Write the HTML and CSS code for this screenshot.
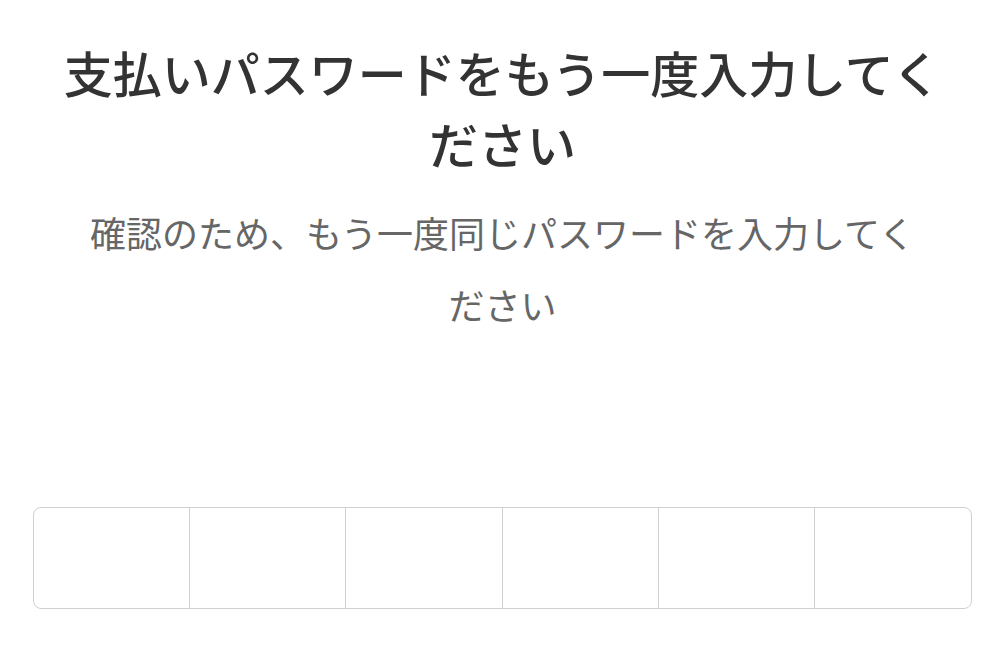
FILE: index.html
```html
<!DOCTYPE html>
<html lang="ja">
<head>
<meta charset="utf-8">
<title>支払いパスワード確認</title>
<link rel="stylesheet" href="styles.css">
</head>
<body>
<main class="page">
  <h1 class="title">支払いパスワードをもう一度入力してください</h1>
  <p class="subtitle">確認のため、もう一度同じパスワードを入力してください</p>
  <div class="pin">
    <div class="pin-cell"></div>
    <div class="pin-cell"></div>
    <div class="pin-cell"></div>
    <div class="pin-cell"></div>
    <div class="pin-cell"></div>
    <div class="pin-cell"></div>
  </div>
</main>
</body>
</html>
```
FILE: styles.css
```css
html, body {
  margin: 0;
  padding: 0;
  background: #ffffff;
}

body {
  font-family: "Noto Sans CJK JP", "Noto Sans", sans-serif;
}

.page {
  display: flex;
  flex-direction: column;
  align-items: stretch;
  padding: 36px 33px 0;
}

.title {
  margin: 0;
  padding: 0 20px;
  font-size: 49px;
  line-height: 71px;
  font-weight: 500;
  color: #333333;
  text-align: center;
}

.subtitle {
  margin: 18px 0 0;
  padding: 0 45px;
  font-size: 36px;
  line-height: 72px;
  font-weight: 400;
  color: #666666;
  text-align: center;
}

/* six-digit PIN entry row */
.pin {
  margin-top: 167px;
  display: grid;
  grid-template-columns: repeat(6, 1fr);
  height: 100px;
  border: 1px solid #d0d0d0;
  border-radius: 8px;
  overflow: hidden;
}

.pin-cell {
  border-right: 1px solid #d0d0d0;
}

.pin-cell:last-child {
  border-right: none;
}
```
